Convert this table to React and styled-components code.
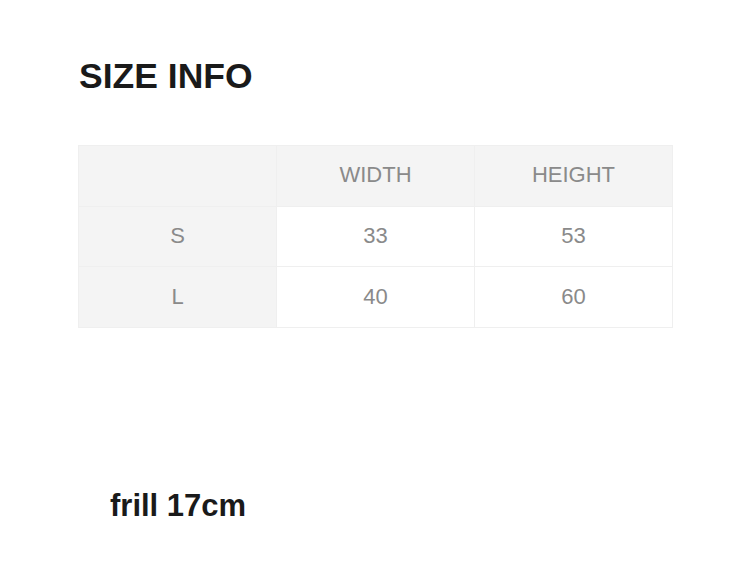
import React from "react";
import styled, { createGlobalStyle } from "styled-components";

const GlobalStyle = createGlobalStyle`
  body {
    margin: 0;
    background: #ffffff;
    font-family: "Liberation Sans", Arial, sans-serif;
  }
`;

const Page = styled.div`
  width: 750px;
  height: 574px;
  padding-top: 58px;
  box-sizing: border-box;
`;

const Title = styled.h1`
  margin: 0 0 0 79px;
  font-size: 35.5px;
  line-height: 36px;
  font-weight: 700;
  color: #1a1a1a;
`;

const Table = styled.table`
  margin: 51px 0 0 78px;
  width: 595px;
  border-collapse: collapse;
  table-layout: fixed;
`;

const Cell = styled.td`
  height: 60.7px;
  padding: 0 0 1px;
  box-sizing: border-box;
  border: 1px solid #efefef;
  background: ${p => (p.$shaded ? "#f4f4f4" : "#ffffff")};
  color: #8a8a8a;
  font-size: 22px;
  text-align: center;
  vertical-align: middle;
`;

const Note = styled.p`
  margin: 162px 0 0 110px;
  font-size: 31px;
  line-height: 31px;
  font-weight: 700;
  color: #1a1a1a;
`;

const rows = [
  ["S", "33", "53"],
  ["L", "40", "60"]
];

export default function App() {
  return (
    <Page>
      <GlobalStyle />
      <Title>SIZE INFO</Title>
      <Table>
        <tbody>
          <tr>
            <Cell $shaded />
            <Cell $shaded>WIDTH</Cell>
            <Cell $shaded>HEIGHT</Cell>
          </tr>
          {rows.map(([size, w, h]) => (
            <tr key={size}>
              <Cell $shaded>{size}</Cell>
              <Cell>{w}</Cell>
              <Cell>{h}</Cell>
            </tr>
          ))}
        </tbody>
      </Table>
      <Note>frill 17cm</Note>
    </Page>
  );
}
